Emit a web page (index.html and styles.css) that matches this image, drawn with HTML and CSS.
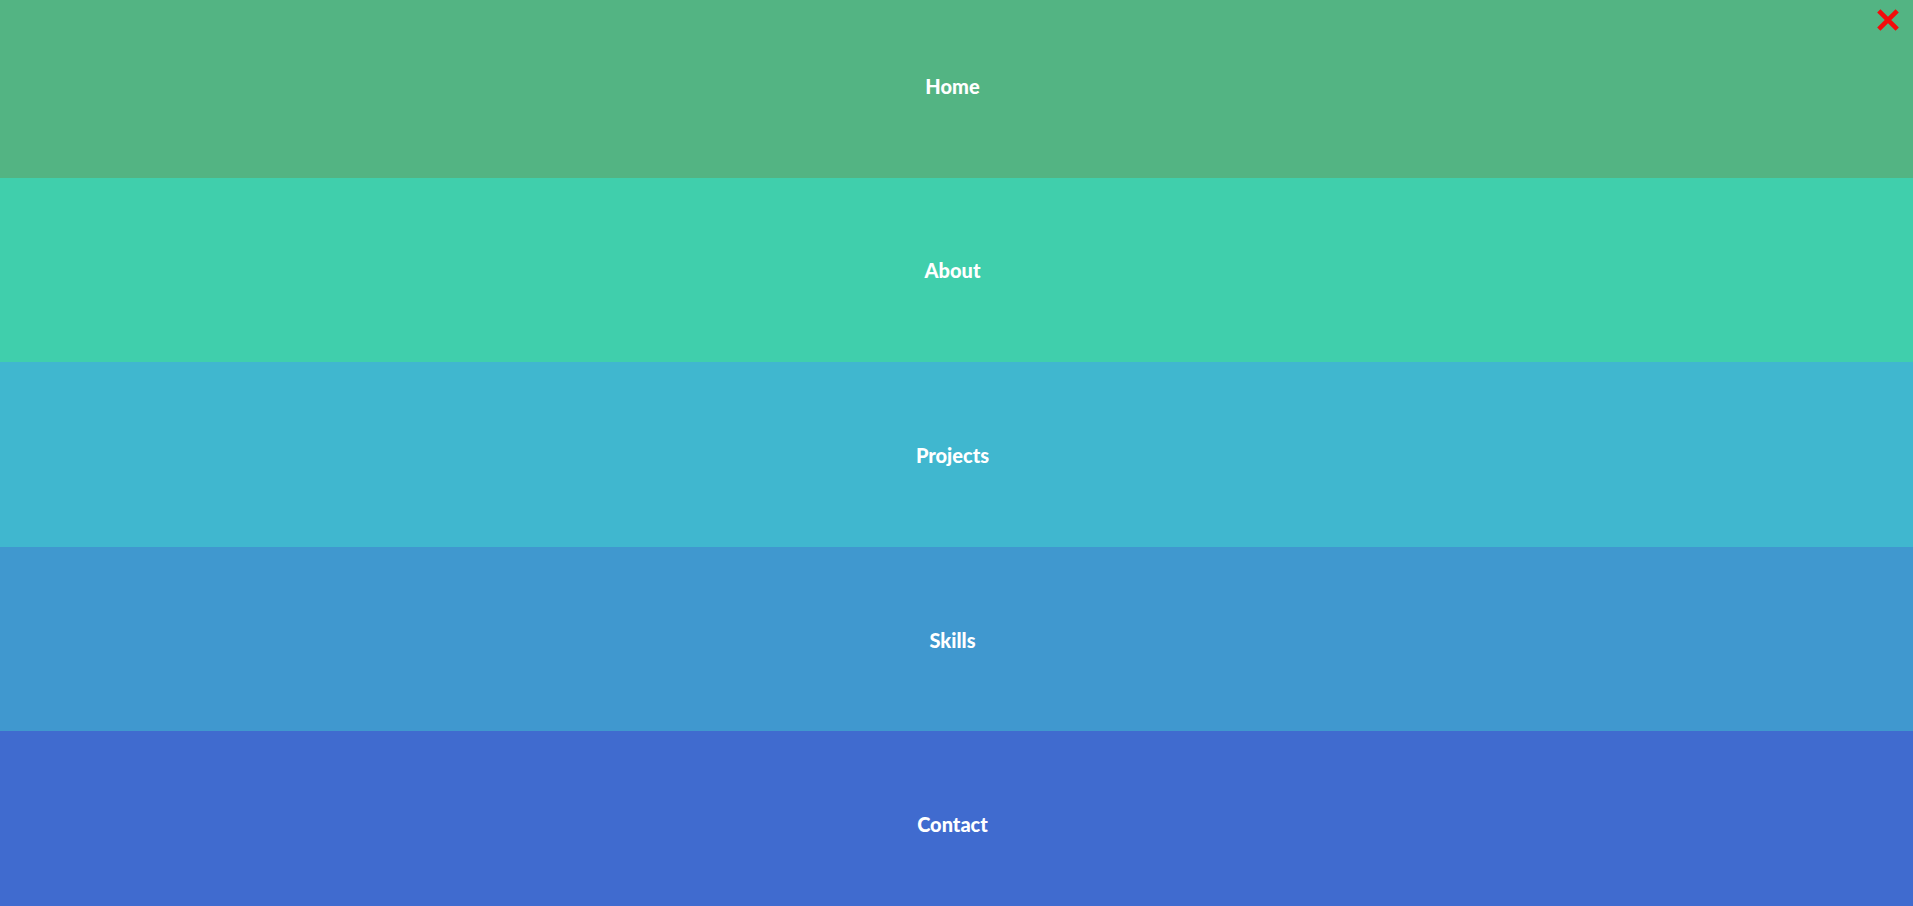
FILE: index.html
```html
<!DOCTYPE html>
<html lang="en">
<head>
<meta charset="utf-8">
<meta name="viewport" content="width=device-width, initial-scale=1">
<title>Menu</title>
<link rel="stylesheet" href="styles.css">
</head>
<body>
<nav class="menu" aria-label="Main">
  <a class="menu-link home" href="#home">Home</a>
  <a class="menu-link about" href="#about">About</a>
  <a class="menu-link projects" href="#projects">Projects</a>
  <a class="menu-link skills" href="#skills">Skills</a>
  <a class="menu-link contact" href="#contact">Contact</a>
</nav>
<button class="close" type="button" aria-label="Close menu">
  <svg class="close-icon" viewBox="0 0 22 22" aria-hidden="true"><path d="M1.8 1.8 20.2 20.2M20.2 1.8 1.8 20.2"/></svg>
</button>
</body>
</html>
```
FILE: styles.css
```css
body {
  margin: 0;
  overflow: hidden;
  font-family: Lato, "Open Sans", sans-serif;
}

.menu {
  display: grid;
  grid-template-rows: repeat(5, 1fr);
  height: calc(100vh + 17px);
  margin-top: -7px;
}

.menu-link {
  display: flex;
  align-items: center;
  justify-content: center;
  padding-top: 1px;
  padding-right: 8px;
  color: #fff;
  font-size: 20px;
  font-weight: 900;
  line-height: 24px;
  text-decoration: none;
}

.home { background: #53b483; }
.about { background: #40cfac; }
.projects { background: #40b7cf; }
.skills { background: #4098cf; }
.contact { background: #406bcf; }

.close {
  position: absolute;
  top: 9px;
  right: 14px;
  padding: 0;
  border: 0;
  background: none;
  cursor: pointer;
}

.close-icon {
  display: block;
  width: 22px;
  height: 22px;
  fill: none;
  stroke: #f30b0b;
  stroke-width: 4.6;
}
```
